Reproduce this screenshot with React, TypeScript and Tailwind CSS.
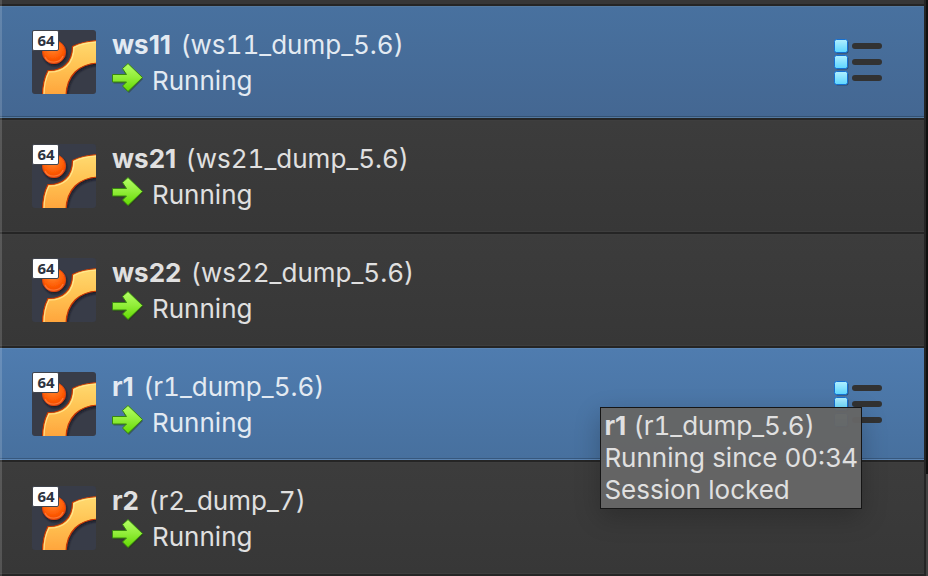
import { useId } from "react";

type Machine = { name: string; snapshot: string; tone: "deep" | "bright" | "plain" };

const machines: Machine[] = [
  { name: "ws11", snapshot: "ws11_dump_5.6", tone: "deep" },
  { name: "ws21", snapshot: "ws21_dump_5.6", tone: "plain" },
  { name: "ws22", snapshot: "ws22_dump_5.6", tone: "plain" },
  { name: "r1", snapshot: "r1_dump_5.6", tone: "bright" },
  { name: "r2", snapshot: "r2_dump_7", tone: "plain" },
];

const tones = {
  deep: "bg-linear-to-b from-[#48719f] to-[#446792] border-[#54799f] text-[#e3eaf2] shadow-[inset_0_-1px_0_#345172]",
  bright: "bg-linear-to-b from-[#4f7caf] to-[#47709e] border-[#5a84b3] text-[#e3eaf2] shadow-[inset_0_-1px_0_#37587e]",
  plain: "bg-linear-to-b from-[#3c3c3c] to-[#373737] border-[#3e3e3e] text-[#e0e0e0]",
};

function SystemIcon() {
  const id = useId();
  return (
    <div className="relative size-16 shrink-0">
      <svg viewBox="0 0 64 64" className="size-16" aria-hidden="true">
        <defs>
          <linearGradient id={id + "band"} x1="0" y1="0" x2="0" y2="1">
            <stop offset="0" stopColor="#ffda70" />
            <stop offset="0.45" stopColor="#ffc454" />
            <stop offset="1" stopColor="#ffa33b" />
          </linearGradient>
          <radialGradient id={id + "ball"} cx="0.45" cy="0.3" r="0.75">
            <stop offset="0" stopColor="#ff8a38" />
            <stop offset="0.55" stopColor="#ff6208" />
            <stop offset="0.85" stopColor="#f74c00" />
            <stop offset="1" stopColor="#d93800" />
          </radialGradient>
          <clipPath id={id + "clip"}><rect width="64" height="64" rx="3" /></clipPath>
          <filter id={id + "shade"} x="-20%" y="-20%" width="150%" height="150%">
            <feDropShadow dx="1" dy="2" stdDeviation="1.3" floodColor="#15171d" floodOpacity="0.75" />
          </filter>
        </defs>
        <g clipPath={"url(#" + id + "clip)"}>
          <rect width="64" height="64" fill="#383c48" />
          <g filter={"url(#" + id + "shade)"}>
            <path d="M10.500 66C10.500 57 12 48 16 40.500C30 41 40.500 33 40.500 16.500C47 13 55 11 66 10.500V33C47 34 34.500 45 34 66Z" fill={"url(#" + id + "band)"} stroke="#c93700" strokeWidth="1.200" />
            <path d="M12 65C12 56 13.500 48.500 17 42C31 42.500 42 34 42 17.500C49 14 56 12.500 65 12" fill="none" stroke="#fff0a0" strokeWidth="1.200" strokeOpacity="0.75" />
            <circle cx="22" cy="22" r="11.500" fill={"url(#" + id + "ball)"} stroke="#dc4510" strokeWidth="1" />
            <path d="M13 27C16 34 28 34 31 26" fill="none" stroke="#ff9255" strokeWidth="1.300" opacity="0.6" />
          </g>
        </g>
        <rect x="0.500" y="0.500" width="26" height="20" rx="1.500" fill="#fff" stroke="#40444d" />
      </svg>
      <span className="absolute top-0 left-0 w-7 text-center font-['Noto_Sans',sans-serif] text-[15px] leading-5 font-bold text-[#2d3340]">64</span>
    </div>
  );
}

function RunningArrow() {
  const id = useId();
  return (
    <svg viewBox="0 0 32 32" className="size-8 shrink-0" aria-hidden="true">
      <defs>
        <linearGradient id={id} x1="0" y1="0" x2="0" y2="1">
          <stop offset="0" stopColor="#b5ff66" />
          <stop offset="0.5" stopColor="#91ed39" />
          <stop offset="1" stopColor="#62d900" />
        </linearGradient>
      </defs>
      <path d="M1.500 13.500H14L11.500 7L17 1.500L31 16L17 30L11.500 24.500L15 20.500H1.500Z" fill="#263615" opacity="0.45" />
      <path d="M0.500 11.500H14.500L10.500 5.500L16 0.500L30.500 14.500L16 28.500L10.500 23L14.500 19H0.500Z" fill={"url(#" + id + ")"} stroke="#388710" />
    </svg>
  );
}

function DetailsIcon() {
  const id = useId();
  return (
    <svg viewBox="0 0 48 48" className="size-12" aria-hidden="true">
      <defs>
        <linearGradient id={id} x1="0" y1="0" x2="0" y2="1">
          <stop offset="0" stopColor="#b1efff" />
          <stop offset="1" stopColor="#5bd5ff" />
        </linearGradient>
      </defs>
      {[0, 16, 32].map((y) => (
        <g key={y}>
          <rect x="1.500" y={y + 1.5} width="13" height="13" rx="2" fill="#263d58" opacity="0.7" />
          <rect x="0.500" y={y + 0.5} width="13" height="13" rx="2" fill={"url(#" + id + ")"} stroke="#1570d2" />
          <rect x="18" y={y + 4} width="30" height="6" rx="3" fill="#323232" />
        </g>
      ))}
    </svg>
  );
}

function Tooltip() {
  return (
    <div role="tooltip" className="absolute top-[59px] right-[62px] z-10 border border-[#151515] bg-[#656565]/97 px-[3px] py-0.5 text-[26px] leading-8 whitespace-nowrap text-[#e0e0e0] shadow-[0_8px_24px_rgba(0,0,0,0.22)]">
      <p><strong>r1</strong> <span className="tabular-nums">(r1_dump_5.6)</span></p>
      <p>Running since 00:34</p>
      <p>Session locked</p>
    </div>
  );
}

export default function App() {
  return (
    <main className="flex min-h-screen bg-[#292929] font-[Inter,'Liberation_Sans',sans-serif]">
      <div className="relative min-w-0 grow">
        <div className="h-1 bg-[#373737]" />
        <ul>
          {machines.map((machine) => (
            <li key={machine.name} className="relative border-t-2 border-[#252525]">
              <div className={"flex h-28 items-center border-y pr-[42px] pl-8 " + tones[machine.tone]}>
                <SystemIcon />
                <div className="mt-0.5 ml-4 flex min-w-0 grow items-center justify-between">
                  <div className="text-[26px] leading-9">
                    <h2><strong>{machine.name}</strong> <span className="ml-0.5 tabular-nums">({machine.snapshot})</span></h2>
                    <p className="flex gap-2"><RunningArrow />Running</p>
                  </div>
                  {machine.tone !== "plain" && (
                    <button type="button" aria-label={"Details of " + machine.name}><DetailsIcon /></button>
                  )}
                </div>
              </div>
              {machine.name === "r1" && <Tooltip />}
            </li>
          ))}
        </ul>
        <div className="h-0.5 bg-[#252525]" />
        <div className="absolute inset-y-0 left-0 w-0.5 bg-white/15" />
      </div>
      <div className="flex w-1 shrink-0 flex-col border-l-2 border-[#252525]">
        <div className="grow-[14] basis-0 bg-[#101010]" />
        <div className="grow-[3] basis-0 bg-[#414141]" />
      </div>
    </main>
  );
}
